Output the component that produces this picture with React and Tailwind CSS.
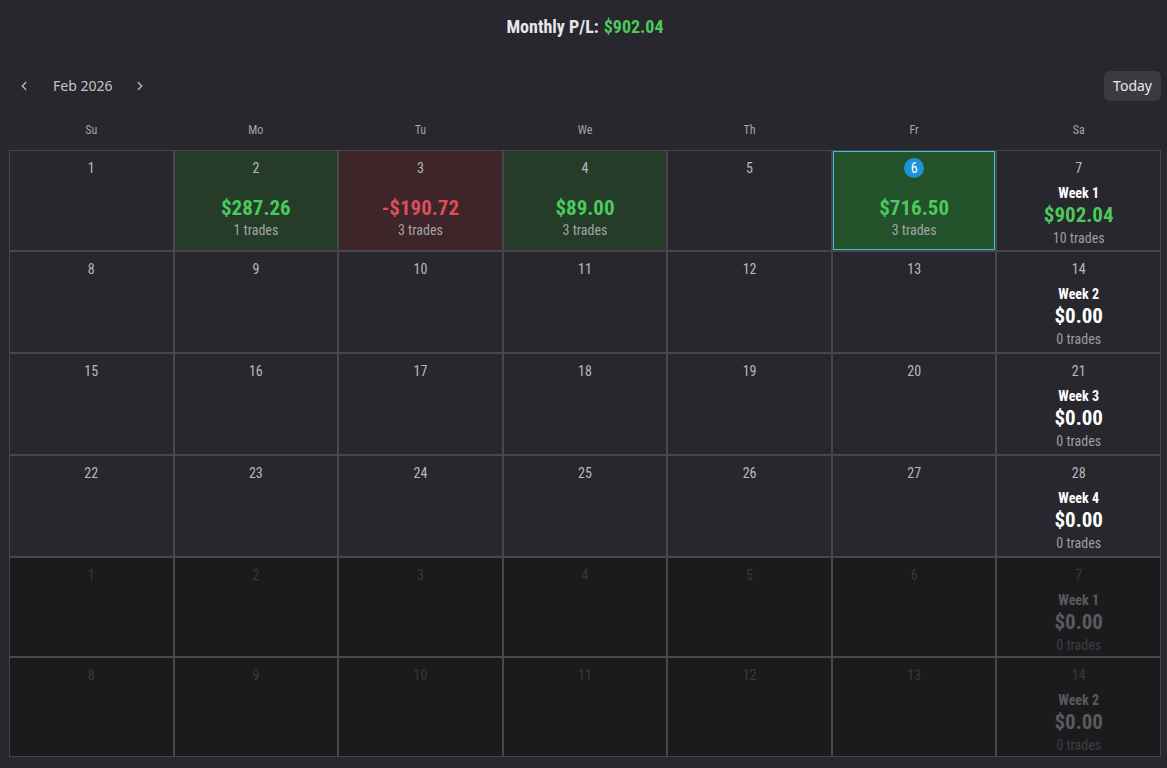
import React from "react";

const cond = { fontFamily: '"Roboto Condensed", Roboto, "Liberation Sans", sans-serif' };

const days = ["Su", "Mo", "Tu", "We", "Th", "Fr", "Sa"];

// trade data for Feb 2026
const trades = {
  2: { pl: 287.26, count: 1 },
  3: { pl: -190.72, count: 3 },
  4: { pl: 89.0, count: 3 },
  6: { pl: 716.5, count: 3 },
};

const fmt = (v) => (v < 0 ? "-$" : "$") + Math.abs(v).toFixed(2);

function buildWeeks() {
  const weeks = [];
  let d = 1;
  for (let w = 0; w < 4; w++) {
    const row = [];
    for (let i = 0; i < 7; i++) row.push({ day: d++, outside: false });
    weeks.push(row);
  }
  // next month padding
  let n = 1;
  for (let w = 0; w < 2; w++) {
    const row = [];
    for (let i = 0; i < 7; i++) row.push({ day: n++, outside: true });
    weeks.push(row);
  }
  return weeks;
}

function DayCell({ cell, last, weekIdx, rowHeight }) {
  const t = !cell.outside ? trades[cell.day] : null;
  const isToday = !cell.outside && cell.day === 6;

  let bg = cell.outside ? "bg-[#1b1b1e]" : "bg-[#28272d]";
  if (t) bg = t.pl >= 0 ? "bg-[#253c29]" : "bg-[#3d2529]";
  if (isToday) bg = "bg-[#23512a] shadow-[inset_0_0_0_1px_#3cc4d6]";

  if (last) {
    const wk = cell.outside ? weekIdx - 3 : weekIdx + 1;
    const weekTrades = cell.outside
      ? []
      : Object.entries(trades).filter(([k]) => k >= weekIdx * 7 + 1 && k <= weekIdx * 7 + 7);
    const total = weekTrades.reduce((s, [, v]) => s + v.pl, 0);
    const count = weekTrades.reduce((s, [, v]) => s + v.count, 0);
    return (
      <div className={`${bg} border border-[#47474b] ${rowHeight} flex flex-col items-center pt-[8px]`}>
        <span className={`text-[14px] leading-[18px] ${cell.outside ? "text-[#38383c]" : "text-[#b9b9be]"}`}>
          {cell.day}
        </span>
        <span className={`mt-[7px] text-[14px] leading-[18px] font-bold ${cell.outside ? "text-[#5a5a5e]" : "text-white"}`}>
          Week {wk}
        </span>
        <span
          className={`text-[21px] leading-[27px] font-bold ${
            cell.outside ? "text-[#5a5a5e]" : total > 0 ? "text-[#4cc95c]" : "text-white"
          }`}
        >
          {fmt(total)}
        </span>
        <span className={`text-[14px] leading-[18px] ${cell.outside ? "text-[#3e3e42]" : "text-[#9d9da2]"}`}>
          {count} trades
        </span>
      </div>
    );
  }

  return (
    <div className={`${bg} border border-[#47474b] ${rowHeight} flex flex-col items-center pt-[8px]`}>
      {isToday ? (
        <span className="w-[20px] h-[20px] rounded-full bg-[#1d93dc] text-white text-[14px] leading-[20px] text-center -mt-[1px] -mb-[1px]">
          {cell.day}
        </span>
      ) : (
        <span className={`text-[14px] leading-[18px] ${cell.outside ? "text-[#38383c]" : "text-[#b9b9be]"}`}>
          {cell.day}
        </span>
      )}
      {t && (
        <>
          <span
            className={`mt-[18px] text-[21px] leading-[26px] font-bold ${
              t.pl >= 0 ? "text-[#4cc95c]" : "text-[#dc4f5c]"
            }`}
          >
            {fmt(t.pl)}
          </span>
          <span className="text-[14px] leading-[18px] text-[#a3a3a8]">{t.count} trades</span>
        </>
      )}
    </div>
  );
}

export default function App() {
  const weeks = buildWeeks();

  return (
    <div className="min-h-screen w-full bg-[#28272d] text-white" style={cond}>
      <div className="h-[55px] flex items-start justify-center text-[18px] leading-[24px] font-bold pt-[15px] pl-[3px]">
        <span className="text-[#e6e6ea]">Monthly P/L:</span>
        <span className="ml-[5px] text-[#4cc95c]">$902.04</span>
      </div>

      <div className="flex items-center justify-between pl-[16px] pr-[6px] h-[62px]">
        <div className="flex items-center" style={{ fontFamily: '"Noto Sans", sans-serif' }}>
          <button className="w-[16px] h-[16px] flex items-center justify-center text-[#bdbdc2]">
            <svg width="14" height="14" viewBox="0 0 24 24" fill="none" stroke="currentColor" strokeWidth="2.2" strokeLinecap="round" strokeLinejoin="round">
              <path d="M15 6l-6 6 6 6" />
            </svg>
          </button>
          <span className="ml-[21px] text-[14px] text-[#c4c4c9] -mt-[1px]">Feb 2026</span>
          <button className="ml-[20px] w-[16px] h-[16px] flex items-center justify-center text-[#bdbdc2]">
            <svg width="14" height="14" viewBox="0 0 24 24" fill="none" stroke="currentColor" strokeWidth="2.2" strokeLinecap="round" strokeLinejoin="round">
              <path d="M9 6l6 6-6 6" />
            </svg>
          </button>
        </div>
        <button
          className="h-[30px] px-[9px] rounded-[6px] bg-[#3a3a40] text-[14px] text-[#e9e9ee] leading-[28px]"
          style={{ fontFamily: '"Noto Sans", sans-serif' }}
        >
          Today
        </button>
      </div>

      <div className="px-[9px] pr-[6px]">
        <div className="grid grid-cols-7 h-[26px] items-center">
          {days.map((d) => (
            <span key={d} className="text-center text-[12px] text-[#a4a4a9]">
              {d}
            </span>
          ))}
        </div>
        <div className="grid grid-cols-7 mt-[7px]">
          {weeks.map((row, wi) =>
            row.map((cell, ci) => (
              <DayCell
                key={`${wi}-${ci}`}
                cell={cell}
                last={ci === 6}
                weekIdx={wi}
                rowHeight={wi === 0 ? "h-[101px]" : wi < 4 ? "h-[102px]" : "h-[100px]"}
              />
            ))
          )}
        </div>
      </div>
    </div>
  );
}
